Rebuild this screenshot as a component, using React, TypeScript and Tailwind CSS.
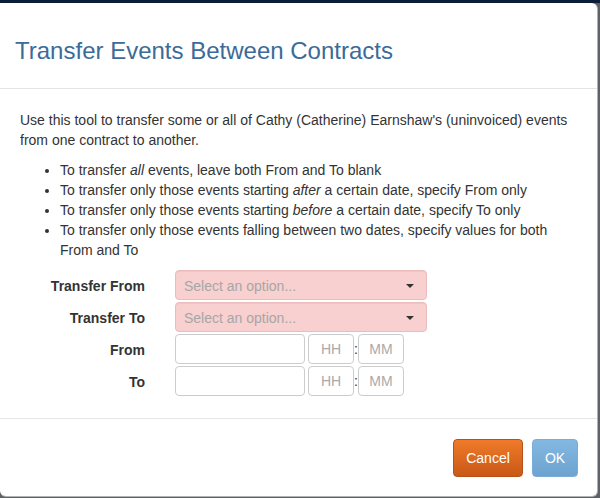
import { ChangeEvent } from 'react';

const font = { fontFamily: '"Liberation Sans", Arial, sans-serif' };

function Caret() {
  return (
    <svg width="8" height="4" viewBox="0 0 8 4" className="absolute right-[12px] top-[13px]">
      <path d="M0 0 L8 0 L4 4 Z" fill="#333" />
    </svg>
  );
}

function SelectBox() {
  return (
    <div className="relative w-[252px] h-[30px] rounded-[4px] border border-[#ebbcbc] bg-[#f8d0d0] shadow-[inset_0_1px_1px_rgba(0,0,0,0.05)]">
      <span className="absolute left-[8px] top-[5px] text-[14px] leading-[20px] text-[#a6a6a6]">Select an option...</span>
      <Caret />
    </div>
  );
}

function DateTime() {
  const noop = (_e: ChangeEvent<HTMLInputElement>) => {};
  return (
    <div className="flex items-center">
      <input onChange={noop} className="w-[130px] h-[30px] rounded-[4px] border border-[#cccccc] bg-white px-2 text-[14px] outline-none" />
      <input
        onChange={noop}
        placeholder="HH"
        className="ml-[3px] w-[46px] h-[30px] rounded-[4px] border border-[#cccccc] bg-white text-center text-[14px] outline-none placeholder:text-[#aaaaaa]"
      />
      <span className="w-[4px] text-center text-[14px] text-[#333]">:</span>
      <input
        onChange={noop}
        placeholder="MM"
        className="w-[46px] h-[30px] rounded-[4px] border border-[#cccccc] bg-white text-center text-[14px] outline-none placeholder:text-[#aaaaaa]"
      />
    </div>
  );
}

function Row({ label, children }: { label: string; children: React.ReactNode }) {
  return (
    <div className="flex items-center h-[32px]">
      <label className="w-[125px] pt-[1px] text-right font-bold text-[14px] text-[#333]">{label}</label>
      <div className="ml-[30px]">{children}</div>
    </div>
  );
}

export default function App() {
  return (
    <div style={font} className="w-[600px] h-[498px] bg-[#5e6166] flex flex-col overflow-hidden">
      <div className="h-[3px] shrink-0 bg-[#0c1d3a]" />
      <div className="flex-1 flex">
        <div className="w-[598px] h-[494px] bg-white rounded-r-[6px] rounded-bl-[6px] border-r border-b border-[rgba(0,0,0,0.3)] flex flex-col">
          {/* Header */}
          <div className="h-[86px] shrink-0 border-b border-[#e5e5e5] pl-[15px] pt-[35px]">
            <h4 className="text-[24px] leading-[1.1] text-[#3b6b98]">Transfer Events Between Contracts</h4>
          </div>

          {/* Body */}
          <div className="p-[20px] pb-[21px] text-[14px] leading-[20px] text-[#333]">
            <p className="mt-[1px] mb-[10px]">
              Use this tool to transfer some or all of Cathy (Catherine) Earnshaw's (uninvoiced) events from one contract to another.
            </p>
            <ul className="list-disc pl-[40px] mb-[9px]">
              <li>
                To transfer <em>all</em> events, leave both From and To blank
              </li>
              <li>
                To transfer only those events starting <em>after</em> a certain date, specify From only
              </li>
              <li>
                To transfer only those events starting <em>before</em> a certain date, specify To only
              </li>
              <li>To transfer only those events falling between two dates, specify values for both From and To</li>
            </ul>
            <div className="flex flex-col">
              <Row label="Transfer From">
                <SelectBox />
              </Row>
              <Row label="Transfer To">
                <SelectBox />
              </Row>
              <Row label="From">
                <DateTime />
              </Row>
              <Row label="To">
                <DateTime />
              </Row>
            </div>
          </div>

          {/* Footer */}
          <div className="border-t border-[#e5e5e5] pl-[20px] pr-[19px] pt-[20px] flex justify-end gap-[9px]">
            <button className="w-[70px] h-[38px] rounded-[4px] border border-[#b4521a] bg-gradient-to-b from-[#f07a2a] to-[#c95816] text-white text-[14px]">
              Cancel
            </button>
            <button className="w-[46px] h-[38px] rounded-[4px] border border-[#79acd6] bg-gradient-to-b from-[#83b8e2] to-[#6da3cf] text-white text-[14px]">
              OK
            </button>
          </div>
        </div>
      </div>
    </div>
  );
}
